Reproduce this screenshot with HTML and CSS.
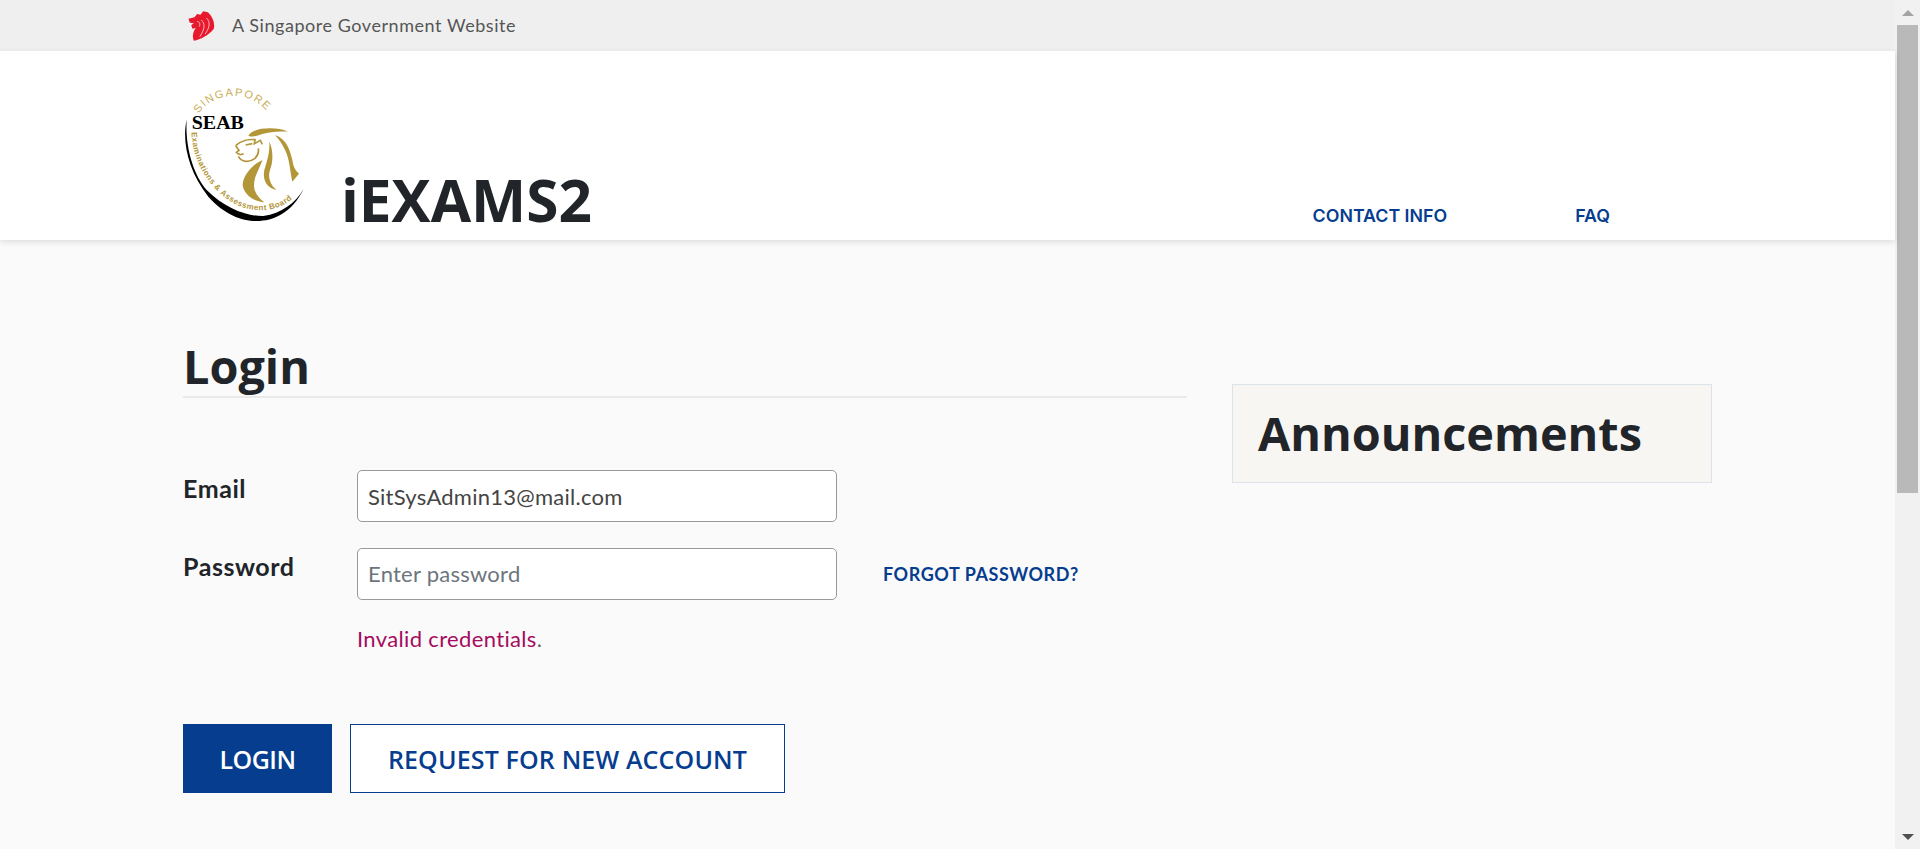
FILE: index.html
```html
<!DOCTYPE html>
<html lang="en">
<head>
    <meta charset="UTF-8">
    <meta name="viewport" content="width=device-width, initial-scale=1.0">
    <title>iEXAMS2 - Login</title>
    <link rel="stylesheet" href="styles.css">
</head>
<body>
    <div class="page">
        <div class="masthead">
            <svg class="lion-mark" viewBox="25 15 80 90" aria-hidden="true">
                <path fill="#e8192c" d="M26 38 L44 34 L52 24 L62 26 L70 16 L84 19 C97 30 106 50 102 68 C86 88 62 100 42 104 C36 92 40 76 48 66 L38 68 L34 58 L42 52 L30 50Z"/>
                <path fill="none" stroke="#f8b4ba" stroke-width="3" d="M64 42 C76 52 76 68 60 92 M80 36 C92 48 90 64 76 84 M52 46 C60 48 62 54 58 62"/>
            </svg>
            <span>A Singapore Government Website</span>
        </div>

        <header class="header">
            <div class="brand">
                <svg class="seab-logo" viewBox="24 15 366 429" aria-label="SEAB logo">
                    <defs>
                        <path id="arcTop" d="M72 116 C100 62 215 30 282 116"/>
                        <path id="arcBottom" d="M50 172 C50 260 110 360 200 396 C270 420 350 402 386 322"/>
                    </defs>
                    <path fill="#000" d="M35 134 C20 200 40 290 100 365 C150 420 200 438 245 438 C295 438 350 415 386 342 C360 385 320 415 265 423 C215 424 150 400 95 345 C55 300 30 215 35 134Z"/>
                    <text class="logo-gold-text" font-size="33"><textPath href="#arcTop" textLength="232">SINGAPORE</textPath></text>
                    <text x="50" y="163" class="logo-seab" textLength="157" lengthAdjust="spacingAndGlyphs">SEAB</text>
                    <text class="logo-board-text" font-size="24"><textPath href="#arcBottom" textLength="445">Examinations &amp; Assessment Board</textPath></text>
                    <g fill="#b39638">
                        <path d="M220 182 C228 166 255 160 285 160 C305 160 325 163 338 170 C310 168 285 170 262 177 C245 182 235 188 220 182Z"/>
                        <path d="M300 180 C335 192 345 225 352 255 C355 275 360 285 372 296 L352 320 C345 290 345 255 330 225 C322 205 310 192 300 180Z"/>
                        <path d="M283 200 C295 225 295 260 285 285 C278 305 285 330 305 345 C275 340 262 315 268 285 C275 260 285 235 283 200Z"/>
                        <path d="M245 265 C225 280 203 305 203 330 C207 360 235 378 268 382 C240 360 232 340 240 310 C248 285 258 270 262 255Z"/>
                    </g>
                    <path fill="none" stroke="#b39638" stroke-width="5" d="M182 212 C198 198 222 192 240 194 L238 206 L256 196 L262 208 M182 212 L192 226 L184 232 C190 240 200 240 206 236 M190 244 C200 262 222 264 240 250 C248 242 252 232 250 220 M212 210 L232 206"/>
                </svg>
                <span class="app-name">iEXAMS2</span>
            </div>
            <nav class="nav">
                <a href="#" class="nav-contact">CONTACT INFO</a>
                <a href="#" class="nav-faq">FAQ</a>
            </nav>
        </header>

        <main class="main">
            <section class="login">
                <h1 class="login-title">Login</h1>
                <form class="login-form">
                    <label class="field-label" for="email">Email</label>
                    <input class="field-input" id="email" type="text" value="SitSysAdmin13@mail.com">
                    <span></span>

                    <label class="field-label" for="password">Password</label>
                    <input class="field-input field-password" id="password" type="password" placeholder="Enter password">
                    <a href="#" class="forgot">FORGOT PASSWORD?</a>

                    <p class="error">Invalid credentials<span class="error-dot">.</span></p>

                    <div class="actions">
                        <button type="button" class="btn btn-primary">LOGIN</button>
                        <button type="button" class="btn btn-outline">REQUEST FOR NEW ACCOUNT</button>
                    </div>
                </form>
            </section>
            <aside class="announcements">
                <h2>Announcements</h2>
            </aside>
        </main>
    </div>

    <div class="scrollbar" aria-hidden="true">
        <div class="scroll-btn"><span class="arrow-up"></span></div>
        <div class="scroll-thumb"></div>
        <div class="scroll-rest"></div>
        <div class="scroll-btn"><span class="arrow-down"></span></div>
    </div>
</body>
</html>
```

FILE: styles.css
```css
html, body {
    height: 100%;
}
body {
    display: flex;
    margin: 0;
    overflow: hidden;
    background: #fafafa;
    color: #212529;
    font-family: "Lato", "Liberation Sans", sans-serif;
}
.page {
    flex: 1;
    min-width: 0;
}

/* top strip */
.masthead {
    display: flex;
    align-items: center;
    height: 51px;
    padding-left: 188px;
    background: #efefef;
    color: #555;
    font-size: 18px;
    letter-spacing: 0.55px;
}
.masthead span {
    margin-top: -2px;
}
.lion-mark {
    width: 27px;
    height: 30px;
    margin-right: 17px;
}

/* header */
.header {
    display: flex;
    justify-content: space-between;
    align-items: flex-end;
    height: 189px;
    padding-left: 183px;
    background: #fff;
    box-shadow: 0 2px 6px rgba(0, 0, 0, 0.12);
    position: relative;
}
.brand {
    display: flex;
    align-items: flex-end;
    padding-bottom: 17px;
}
.seab-logo {
    width: 122px;
    height: 143px;
}
.app-name {
    margin-left: 36px;
    margin-bottom: -6px;
    font-family: "Open Sans", sans-serif;
    font-weight: 700;
    font-size: 58.5px;
    line-height: 60px;
}
.nav {
    display: flex;
    padding-right: 285px;
    padding-bottom: 14px;
}
.nav a {
    color: #063d8f;
    font-family: "Inter", sans-serif;
    font-size: 17.8px;
    font-weight: 600;
    text-decoration: none;
}
.nav-contact {
    margin-right: 128px;
}
.logo-gold-text {
    fill: #c9ad55;
    font-family: "Liberation Sans", sans-serif;
}
.logo-board-text {
    fill: #b39638;
    font-family: "Liberation Sans", sans-serif;
    font-weight: 700;
}
.logo-seab {
    fill: #000;
    font-family: "Liberation Serif", serif;
    font-weight: 700;
    font-size: 56px;
}

/* main area */
.main {
    display: flex;
    gap: 45px;
    padding: 0 183px;
}
.login {
    width: 1004px;
}
.login-title {
    margin: 96px 0 0;
    border-bottom: 2px solid #e9e9e9;
    font-family: "Open Sans", sans-serif;
    font-weight: 700;
    font-size: 46.8px;
    line-height: 60px;
}
.login-form {
    display: grid;
    grid-template-columns: 174px 480px 1fr;
    row-gap: 26px;
    align-items: start;
    margin-top: 72px;
}
.field-label {
    padding-top: 2px;
    font-size: 25px;
    font-weight: 700;
    letter-spacing: 0.55px;
    line-height: 32px;
}
.field-input {
    box-sizing: border-box;
    width: 480px;
    height: 52px;
    padding: 0 10px;
    border: 1px solid #999;
    border-radius: 5px;
    background: #fff;
    color: #444;
    font-family: "Lato", sans-serif;
    font-size: 22px;
    letter-spacing: 0.25px;
}
.field-password {
    padding-bottom: 2px;
}
.field-input::placeholder {
    color: #6c757d;
}
.forgot {
    align-self: center;
    margin-left: 46px;
    color: #063d8f;
    font-size: 18px;
    font-weight: 700;
    letter-spacing: 0.55px;
    text-decoration: none;
}
.error {
    grid-column: 2 / 4;
    margin: -1px 0 0;
    color: #a50b5e;
    font-size: 22px;
    letter-spacing: 0.35px;
    line-height: 28px;
}
.error-dot {
    color: #666;
}
.actions {
    grid-column: 1 / 4;
    display: flex;
    gap: 18px;
    margin-top: 45px;
}
.btn {
    height: 69px;
    padding: 0;
    font-family: "Open Sans", sans-serif;
    font-size: 25px;
    font-weight: 600;
    border: 1px solid #063d8f;
    border-radius: 0;
}
.btn-primary {
    width: 149px;
    background: #063d8f;
    color: #fff;
    letter-spacing: -0.5px;
}
.btn-outline {
    width: 435px;
    background: #fff;
    color: #063d8f;
    letter-spacing: 0.15px;
}

/* right side */
.announcements {
    box-sizing: border-box;
    width: 480px;
    height: 99px;
    margin-top: 144px;
    padding-left: 25px;
    background: #f8f6f3;
    border: 1px solid #dde3ea;
}
.announcements h2 {
    margin: 0;
    font-family: "Open Sans", sans-serif;
    font-size: 46.8px;
    font-weight: 700;
    line-height: 97px;
}

/* scrollbar at the right edge */
.scrollbar {
    display: flex;
    flex-direction: column;
    width: 25px;
    background: #f1f1f1;
}
.scroll-btn {
    display: flex;
    justify-content: center;
    align-items: center;
    height: 25px;
}
.arrow-up, .arrow-down {
    width: 0;
    height: 0;
    border-left: 6px solid transparent;
    border-right: 6px solid transparent;
}
.arrow-up {
    border-bottom: 6px solid #a3a3a3;
}
.arrow-down {
    border-top: 6px solid #505050;
}
.scroll-thumb {
    width: 21px;
    height: 468px;
    margin-left: 2px;
    background: #b9b9b9;
}
.scroll-rest {
    flex: 1;
}
```
